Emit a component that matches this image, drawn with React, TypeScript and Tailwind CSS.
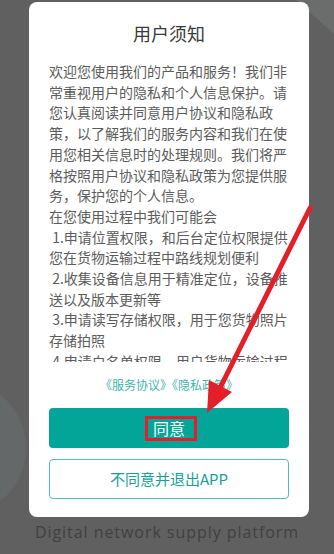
import React from 'react'

const lines = [
  '欢迎您使用我们的产品和服务！我们非',
  '常重视用户的隐私和个人信息保护。请',
  '您认真阅读并同意用户协议和隐私政',
  '策，以了解我们的服务内容和我们在使',
  '用您相关信息时的处理规则。我们将严',
  '格按照用户协议和隐私政策为您提供服',
  '务，保护您的个人信息。',
  '在您使用过程中我们可能会',
  ' 1.申请位置权限，和后台定位权限提供',
  '您在货物运输过程中路线规划便利',
  ' 2.收集设备信息用于精准定位，设备推',
  '送以及版本更新等',
  ' 3.申请读写存储权限，用于您货物照片',
  '存储拍照',
  ' 4.申请白名单权限，用户货物运输过程',
  '中保持定位服务正常运行',
]

const cjk = { fontFamily: '"Noto Sans CJK SC", "Noto Sans", sans-serif' }

export default function App() {
  return (
    <div className="relative w-[334px] h-[554px] overflow-hidden bg-[#606060]" style={cjk}>
      {/* background decoration behind the overlay */}
      <svg className="absolute inset-0 pointer-events-none" width="334" height="554">
        <polygon points="296,0 334,0 334,34" fill="#6b6c6c" />
        <circle cx="-42" cy="448" r="68" fill="#656868" />
      </svg>

      <div className="relative flex flex-col">
        {/* dialog */}
        <div className="mt-[2px] ml-[29px] w-[280px] h-[515px] rounded-[8px] bg-white px-[20px] flex flex-col">
          <div className="pt-[20px] pb-[17px] text-center text-[18px] leading-[22px] text-[#3a3a3a]">
            用户须知
          </div>
          <div className="h-[301px] overflow-hidden text-[14px] leading-[20.7px] text-[#5c5c5c]">
            {lines.map((l, i) => (
              <div key={i} className="whitespace-pre">{l}</div>
            ))}
          </div>
          <div className="mt-[15px] text-center text-[12px] leading-[16px] text-[#3fb5aa]">
            《服务协议》《隐私政策》
          </div>
          <button className="mt-[15px] h-[40px] w-full rounded-[4px] bg-[#03a599] text-white text-[16px] flex items-center justify-center">
            同意
          </button>
          <button className="mt-[11px] h-[40px] w-full rounded-[4px] border border-[#52bdb3] bg-white text-[#15a295] text-[15px] flex items-center justify-center">
            不同意并退出APP
          </button>
        </div>

        <div
          className="mt-[7px] text-center text-[16px] leading-[16px] tracking-[0.95px] text-[#404040]"
          style={{ fontFamily: '"Open Sans", "Noto Sans", sans-serif' }}
        >
          Digital network supply platform
        </div>
      </div>

      {/* red annotation */}
      <div className="absolute left-[145px] top-[416px] w-[52px] h-[25px] border-[3px] border-[#e3202a]" />
      <svg className="absolute inset-0 pointer-events-none" width="334" height="554">
        <line x1="310" y1="208" x2="221" y2="386" stroke="#e3202a" strokeWidth="5" strokeLinecap="round" />
        <polygon points="207,413 209,380 232,392" fill="#e3202a" />
      </svg>
    </div>
  )
}
